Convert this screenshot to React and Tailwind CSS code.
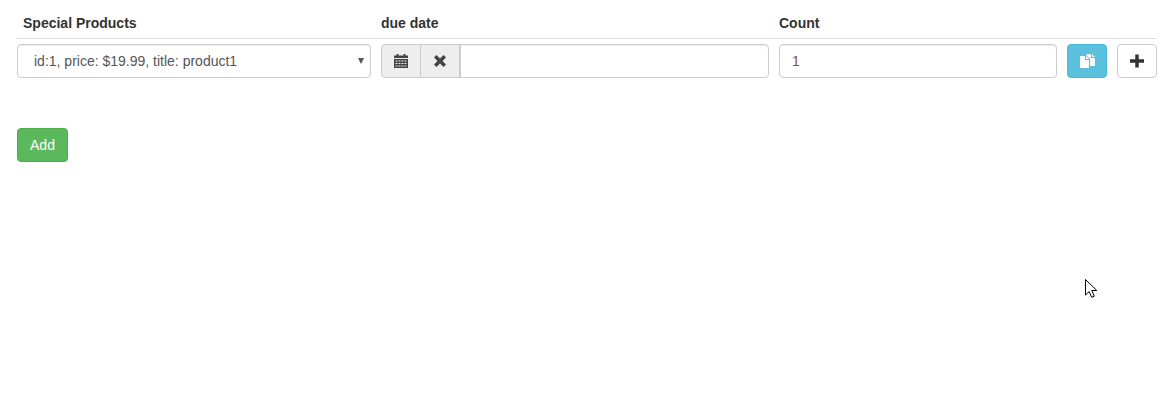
const FONT = 'font-["Liberation_Sans",Arial,sans-serif]'

function CalendarIcon() {
  return (
    <svg width="14" height="14" viewBox="0 0 14 14" fill="#444">
      <path d="M0 1.500h2.500V0H4.500v1.500h5V0h2v1.500H14V4H0z" />
      <path fillRule="evenodd" d="M0 5h14v9H0zM1.500 6.500v1h2v-1zm3 0v1h2v-1zm3 0v1h2v-1zm3 0v1h2v-1zM1.500 9v1h2V9zm3 0v1h2V9zm3 0v1h2V9zm3 0v1h2V9zM1.500 11.500v1h2v-1zm3 0v1h2v-1zm3 0v1h2v-1zm3 0v1h2v-1z" />
    </svg>
  )
}

function RemoveIcon() {
  return (
    <svg width="12" height="12" viewBox="0 0 12 12" fill="#444">
      <path d="M2.500 0 6 3.500 9.500 0 12 2.500 8.500 6l3.500 3.500L9.500 12 6 8.500 2.500 12 0 9.500 3.500 6 0 2.500z" />
    </svg>
  )
}

function DuplicateIcon() {
  return (
    <svg width="15" height="14" viewBox="0 0 15 14" fill="#fff">
      <path opacity="0.9" d="M6.500 0H11v4h4v8h-5V5L6.500 1.500zM12 0l3 3h-3z" />
      <path d="M0 2h5v4h4v8H0zM6 2l3 3H6z" />
    </svg>
  )
}

function PlusIcon() {
  return (
    <svg width="14" height="14" viewBox="0 0 14 14" fill="#333">
      <path d="M5.250 0.500h3.500v4.750H14v3.500H8.750v4.750h-3.500V8.750H0v-3.500h5.250z" />
    </svg>
  )
}

function MouseCursor() {
  return (
    <svg className="absolute left-[1085px] top-[279px]" width="14" height="20" viewBox="0 0 14 20">
      <path d="M.5.500v15.500l3.700-3.500 2.500 5.800 2.600-1.100-2.500-5.700h5z" fill="#fff" stroke="#000" strokeWidth="1" />
    </svg>
  )
}

export default function App() {
  return (
    <div className={`relative h-[410px] overflow-hidden bg-white pl-[17px] pr-[9px] text-[14px] text-[#333] ${FONT}`}>
      <div className="flex h-[39px] gap-[10px] border-b border-[#ddd] pt-[14px] font-bold leading-[18px]">
        <div className="w-[354px] pl-[6px]">Special Products</div>
        <div className="w-[388px]">due date</div>
        <div className="w-[278px]">Count</div>
      </div>

      <div className="mt-[5px] flex h-[34px] gap-[10px]">
        <div className="relative w-[354px]">
          <select className={`h-[34px] w-full appearance-none rounded border border-[#ccc] bg-white pl-[16px] text-[14px] text-[#555] shadow-[inset_0_1px_1px_rgba(0,0,0,0.075)] ${FONT}`}>
            <option>id:1, price: $19.99, title: product1</option>
          </select>
          <svg className="pointer-events-none absolute right-[7px] top-[14px]" width="6" height="6" viewBox="0 0 6 6" fill="#555">
            <path d="M0 0h6L3 6z" />
          </svg>
        </div>

        <div className="flex w-[388px]">
          <button className="flex w-[40px] items-center justify-center rounded-l border border-[#ccc] bg-[#eee]">
            <CalendarIcon />
          </button>
          <button className="-ml-px flex w-[40px] items-center justify-center border border-[#ccc] bg-[#eee]">
            <RemoveIcon />
          </button>
          <input className="min-w-0 flex-1 rounded-r border border-[#ccc] bg-white shadow-[inset_0_1px_1px_rgba(0,0,0,0.075)]" />
        </div>

        <input
          defaultValue="1"
          className={`w-[278px] rounded border border-[#ccc] bg-white px-[12px] text-[14px] text-[#8a4a44] shadow-[inset_0_1px_1px_rgba(0,0,0,0.075)] ${FONT}`}
        />

        <button className="flex w-[40px] items-center justify-center rounded border border-[#46b8da] bg-[#5bc0de]">
          <DuplicateIcon />
        </button>
        <button className="flex w-[40px] items-center justify-center rounded border border-[#ccc] bg-white">
          <PlusIcon />
        </button>
      </div>

      <button className="mt-[50px] h-[34px] w-[51px] rounded border border-[#4cae4c] bg-[#5cb85c] text-[14px] text-white">
        Add
      </button>

      <MouseCursor />
    </div>
  )
}
